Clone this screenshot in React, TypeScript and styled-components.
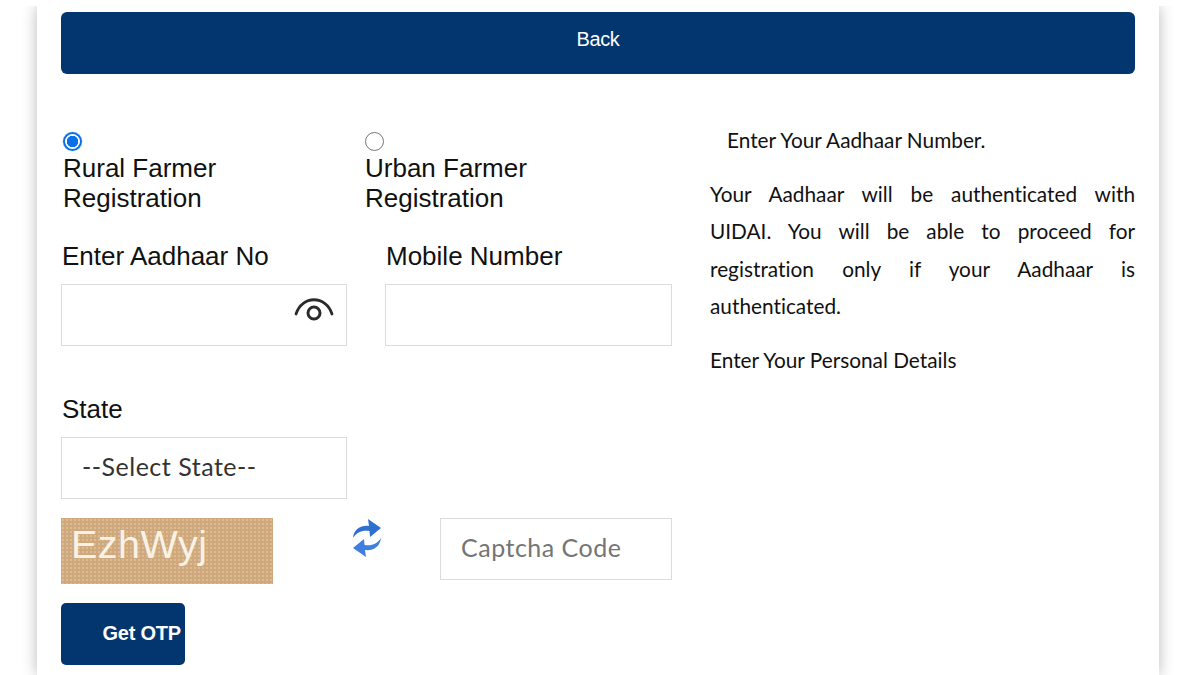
import React from "react";
import styled, { createGlobalStyle } from "styled-components";

const GlobalStyle = createGlobalStyle`
  html, body {
    margin: 0;
    padding: 0;
    height: 675px;
    overflow: hidden;
    background: #fff;
  }
`;

const Card = styled.div`
  box-sizing: border-box;
  width: 1122px;
  height: 669px;
  margin: 6px 0 0 37px;
  padding: 6px 24px 0;
  background: #fff;
  box-shadow: 0 0 14px rgba(0, 0, 0, 0.28);
  clip-path: inset(0 -30px -30px -30px);
`;

const BackButton = styled.button`
  display: block;
  width: 100%;
  height: 62px;
  border: 0;
  border-radius: 6px;
  background: #03366f;
  color: #fff;
  font: 20px/1 "Liberation Sans", Arial, sans-serif;
  letter-spacing: -0.35px;
  padding: 0 0 8px;
`;

const Columns = styled.div`
  display: grid;
  grid-template-columns: 611px 425px;
  column-gap: 38px;
  margin-top: 57px;
`;

const FormColumn = styled.div`
  display: flex;
  flex-direction: column;
  font-family: "Liberation Sans", Arial, sans-serif;
  color: #111;
`;

const RadioRow = styled.div`
  display: grid;
  grid-template-columns: 302px 1fr;
  padding-left: 2px;
  height: 83px;
`;

const RadioOption = styled.label`
  display: block;
  width: 200px;
  font-size: 26px;
  line-height: 29.5px;
`;

const Radio = styled.input`
  appearance: none;
  box-sizing: border-box;
  display: block;
  width: 19px;
  height: 19px;
  margin: 1px 0 3px 0;
  border: 1.5px solid #767676;
  border-radius: 50%;
  background: #fff;

  &:checked {
    border: 2px solid #0b6fe8;
    background: radial-gradient(circle, #0b6fe8 0 5.5px, #fff 6px);
    box-shadow: 0 0 0 0.5px #bcd8fb;
  }
`;

const FieldRow = styled.div`
  display: grid;
  grid-template-columns: 286px 287px;
  column-gap: 38px;
  margin-top: 27px;
`;

const Field = styled.div`
  display: flex;
  flex-direction: column;
`;

const FieldLabel = styled.label`
  font-size: 26px;
  line-height: 30px;
  height: 43px;
  padding-left: 1px;
`;

const InputBox = styled.div`
  position: relative;
  box-sizing: border-box;
  width: 100%;
  height: 62px;
  border: 1px solid #dcdcdc;
  background: #fff;
`;

const EyeIcon = styled.svg`
  position: absolute;
  top: 11px;
  right: 11px;
  width: 42px;
  height: 30px;
`;

const SelectBox = styled(InputBox)`
  display: flex;
  align-items: center;
  padding: 0 0 5px 20px;
  font: 25px "Lato", sans-serif;
  letter-spacing: 0.5px;
  color: #333;
`;

const StateField = styled(Field)`
  width: 286px;
  margin-top: 48px;
`;

const CaptchaRow = styled.div`
  display: grid;
  grid-template-columns: 212px 167px 232px;
  margin-top: 19px;
  align-items: start;
`;

const CaptchaImage = styled.div`
  box-sizing: border-box;
  height: 66px;
  padding: 3px 0 0 10px;
  background-color: #cfa97d;
  background-image: radial-gradient(circle, #dcbd92 1px, transparent 1.4px);
  background-size: 4px 4px;
  color: #f8f2e6;
  font: 39.5px/1.2 "Liberation Sans", Arial, sans-serif;
  letter-spacing: 0.5px;
`;

const RefreshIcon = styled.svg`
  display: block;
  width: 32px;
  height: 42px;
  margin: -1px 0 0 78px;
`;

const CaptchaInput = styled(SelectBox)`
  color: #757575;
  letter-spacing: 0.5px;
`;

const OtpButton = styled.button`
  box-sizing: border-box;
  width: 124px;
  height: 62px;
  margin-top: 19px;
  padding: 0 4px 2px 0;
  border: 0;
  border-radius: 5px;
  background: #03366f;
  color: #fff;
  font: bold 20px "Liberation Sans", Arial, sans-serif;
  text-align: right;
  letter-spacing: -0.2px;
  white-space: nowrap;
`;

const InfoColumn = styled.div`
  font: 20.8px/37.5px "Lato", sans-serif;
  font-variant-ligatures: none;
  color: #111;
`;

const InfoText = styled.p<{ $indent?: boolean }>`
  margin: 0 0 16px;
  margin-top: ${({ $indent }) => ($indent ? "-10px" : "0")};
  padding-left: ${({ $indent }) => ($indent ? "17px" : "0")};
  text-align: justify;
`;

const App: React.FC = () => (
  <>
    <GlobalStyle />
    <Card>
      <BackButton>Back</BackButton>
      <Columns>
        <FormColumn>
          <RadioRow>
            <RadioOption>
              <Radio type="radio" name="farmer" defaultChecked />
              Rural Farmer Registration
            </RadioOption>
            <RadioOption>
              <Radio type="radio" name="farmer" />
              Urban Farmer Registration
            </RadioOption>
          </RadioRow>
          <FieldRow>
            <Field>
              <FieldLabel>Enter Aadhaar No</FieldLabel>
              <InputBox>
                <EyeIcon viewBox="0 0 42 30" fill="none" stroke="#2b2b2b">
                  <path d="M3 18 C9 -1 33 -1 39 18" strokeWidth="2.8" strokeLinecap="round" />
                  <circle cx="21" cy="17" r="6" strokeWidth="3" />
                </EyeIcon>
              </InputBox>
            </Field>
            <Field>
              <FieldLabel>Mobile Number</FieldLabel>
              <InputBox />
            </Field>
          </FieldRow>
          <StateField>
            <FieldLabel>State</FieldLabel>
            <SelectBox>--Select State--</SelectBox>
          </StateField>
          <CaptchaRow>
            <CaptchaImage>EzhWyj</CaptchaImage>
            <RefreshIcon viewBox="0 0 32 42">
              <path
                d="M2 21 C3 12 10 8 18 9 L17 2 L30 11 L19 20 L18.500 14 C11 13 6 15 2 21 Z"
                fill="#2f6fd0"
              />
              <path
                d="M30 21 C29 30 22 34 14 33 L15 40 L2 31 L13 22 L13.500 28 C21 29 26 27 30 21 Z"
                fill="#3f7fe0"
              />
            </RefreshIcon>
            <CaptchaInput>Captcha Code</CaptchaInput>
          </CaptchaRow>
          <OtpButton>Get OTP</OtpButton>
        </FormColumn>
        <InfoColumn>
          <InfoText $indent>Enter Your Aadhaar Number.</InfoText>
          <InfoText>
            Your Aadhaar will be authenticated with UIDAI. You will be able to
            proceed for registration only if your Aadhaar is authenticated.
          </InfoText>
          <InfoText>Enter Your Personal Details</InfoText>
        </InfoColumn>
      </Columns>
    </Card>
  </>
);

export default App;
